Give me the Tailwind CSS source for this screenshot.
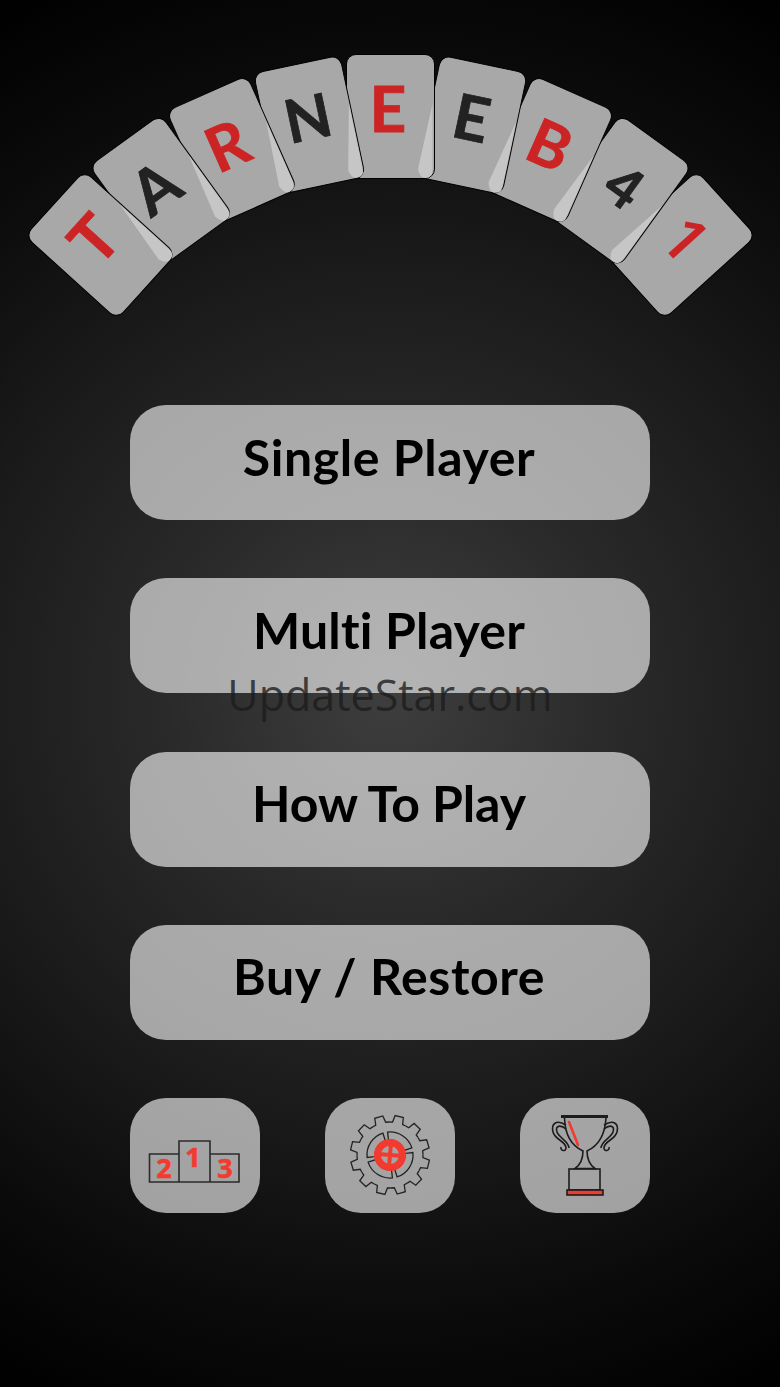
<!DOCTYPE html>
<html lang="en">
<head>
  <meta charset="UTF-8" />
  <meta name="viewport" content="width=device-width, initial-scale=1.0"/>
  <title>Tarneeb 41</title>
  <script src="https://cdn.jsdelivr.net/npm/@tailwindcss/browser@4"></script>
</head>
<body class="font-['Lato',sans-serif]">
  <div class="relative w-[780px] h-[1387px] overflow-hidden bg-[radial-gradient(circle_795px_at_390px_693px,#3e3e3e_0%,#2a2a2a_28%,#1a1a1a_55%,#0a0a0a_80%,#000_100%)]">

    <!-- card fan, every card turns about the same point below the logo -->
    <div class="relative h-[405px]">
      <div class="absolute left-[345.5px] top-[54px] w-[89px] h-[125px] origin-[44.5px_454px] -rotate-[47.8deg] z-[9] bg-[#a8a8a8] border-[1.5px] border-black rounded-[10px] flex items-center justify-center pb-[20px] text-[#cc2424] text-[64px] leading-none font-bold [-webkit-text-stroke:0.8px_currentColor]">
        T
        <svg class="absolute -inset-[1.5px]" width="89" height="125" viewBox="0 0 89 125"><path d="M87.5 50 L87.5 117 Q87.5 124 80 124 Q75 124 73 115 Z" fill="#c6c6c6" stroke="none"/></svg>
      </div>
      <div class="absolute left-[345.5px] top-[54px] w-[89px] h-[125px] origin-[44.5px_454px] -rotate-[35.85deg] z-[8] bg-[#a8a8a8] border-[1.5px] border-black rounded-[10px] flex items-center justify-center pb-[15px] pr-[6px] text-[#222] text-[62px] leading-none font-bold [-webkit-text-stroke:0.8px_currentColor]">
        A
        <svg class="absolute -inset-[1.5px]" width="89" height="125" viewBox="0 0 89 125"><path d="M87.5 50 L87.5 117 Q87.5 124 80 124 Q75 124 73 115 Z" fill="#c6c6c6"/></svg>
      </div>
      <div class="absolute left-[345.5px] top-[54px] w-[89px] h-[125px] origin-[44.5px_454px] -rotate-[23.9deg] z-[7] bg-[#a8a8a8] border-[1.5px] border-black rounded-[10px] flex items-center justify-center pb-[16px] pr-[5px] text-[#cc2424] text-[62px] leading-none font-bold [-webkit-text-stroke:0.8px_currentColor]">
        R
        <svg class="absolute -inset-[1.5px]" width="89" height="125" viewBox="0 0 89 125"><path d="M87.5 50 L87.5 117 Q87.5 124 80 124 Q75 124 73 115 Z" fill="#c6c6c6"/></svg>
      </div>
      <div class="absolute left-[345.5px] top-[54px] w-[89px] h-[125px] origin-[44.5px_454px] -rotate-[11.95deg] z-[6] bg-[#a8a8a8] border-[1.5px] border-black rounded-[10px] flex items-center justify-center pb-[18px] text-[#222] text-[60px] leading-none font-bold [-webkit-text-stroke:0.8px_currentColor]">
        N
        <svg class="absolute -inset-[1.5px]" width="89" height="125" viewBox="0 0 89 125"><path d="M87.5 50 L87.5 117 Q87.5 124 80 124 Q75 124 73 115 Z" fill="#c6c6c6"/></svg>
      </div>
      <div class="absolute left-[345.5px] top-[54px] w-[89px] h-[125px] z-[5] bg-[#a8a8a8] border-[1.5px] border-black rounded-[10px] flex items-center justify-center pb-[18px] pr-[4px] text-[#cc2424] text-[64px] leading-none font-bold [-webkit-text-stroke:0.8px_currentColor]">
        E
        <svg class="absolute -inset-[1.5px]" width="89" height="125" viewBox="0 0 89 125"><path d="M87.5 50 L87.5 117 Q87.5 124 80 124 Q75 124 73 115 Z" fill="#c6c6c6"/></svg>
      </div>
      <div class="absolute left-[345.5px] top-[54px] w-[89px] h-[125px] origin-[44.5px_454px] rotate-[11.95deg] z-[4] bg-[#a8a8a8] border-[1.5px] border-black rounded-[10px] flex items-center justify-center pb-[18px] pr-[3px] text-[#222] text-[62px] leading-none font-bold [-webkit-text-stroke:0.8px_currentColor]">
        E
        <svg class="absolute -inset-[1.5px]" width="89" height="125" viewBox="0 0 89 125"><path d="M87.5 50 L87.5 117 Q87.5 124 80 124 Q75 124 73 115 Z" fill="#c6c6c6"/></svg>
      </div>
      <div class="absolute left-[345.5px] top-[54px] w-[89px] h-[125px] origin-[44.5px_454px] rotate-[23.9deg] z-[3] bg-[#a8a8a8] border-[1.5px] border-black rounded-[10px] flex items-center justify-center pb-[14px] pr-[3px] text-[#cc2424] text-[62px] leading-none font-bold [-webkit-text-stroke:0.8px_currentColor]">
        B
        <svg class="absolute -inset-[1.5px]" width="89" height="125" viewBox="0 0 89 125"><path d="M87.5 50 L87.5 117 Q87.5 124 80 124 Q75 124 73 115 Z" fill="#c6c6c6"/></svg>
      </div>
      <div class="absolute left-[345.5px] top-[54px] w-[89px] h-[125px] origin-[44.5px_454px] rotate-[35.85deg] z-[2] bg-[#a8a8a8] border-[1.5px] border-black rounded-[10px] flex items-center justify-center pb-[14px] pl-[2px] text-[#222] text-[56px] leading-none font-bold [-webkit-text-stroke:0.8px_currentColor]">
        4
        <svg class="absolute -inset-[1.5px]" width="89" height="125" viewBox="0 0 89 125"><path d="M87.5 50 L87.5 117 Q87.5 124 80 124 Q75 124 73 115 Z" fill="#c6c6c6"/></svg>
      </div>
      <div class="absolute left-[345.5px] top-[54px] w-[89px] h-[125px] origin-[44.5px_454px] rotate-[47.8deg] z-[1] bg-[#a8a8a8] border-[1.5px] border-black rounded-[10px] flex items-center justify-center pb-[20px] pr-[2px] text-[#cc2424] text-[62px] leading-none font-semibold font-['Open_Sans',sans-serif]">
        1
      </div>
    </div>

    <!-- menu -->
    <div class="flex flex-col items-center gap-[58.33px] text-black text-[50px] leading-none font-bold">
      <button class="w-[520px] h-[115px] rounded-[36px] bg-white/[.61] pb-[12px] pr-[2px] tracking-[0.6px]">Single Player</button>
      <button class="w-[520px] h-[115px] rounded-[36px] bg-white/[.61] pb-[12px] pr-[2px] tracking-[0.2px]">Multi Player</button>
      <button class="w-[520px] h-[115px] rounded-[36px] bg-white/[.61] pb-[12px] pr-[2px] tracking-[-0.1px]">How To Play</button>
      <button class="w-[520px] h-[115px] rounded-[36px] bg-white/[.61] pb-[12px] pr-[2px] tracking-[0.6px]">Buy / Restore</button>

      <div class="w-[520px] flex justify-between">
        <button class="w-[130px] h-[115px] rounded-[36px] bg-white/[.61]">
          <svg width="130" height="115" viewBox="130 1098 130 115">
            <path d="M179 1182 V1154 H149.5 V1182 H239 V1154 H210 M179 1182 V1141 H210 V1182" fill="none" stroke="#2b2b2b" stroke-width="1.6"/>
            <g fill="#f33a2e" stroke="#f33a2e" stroke-width=".6" font-family="Open Sans" font-weight="700" font-size="27" text-anchor="middle">
              <text x="164" y="1178">2</text>
              <text x="193" y="1167">1</text>
              <text x="225" y="1178">3</text>
            </g>
          </svg>
        </button>
        <button class="w-[130px] h-[115px] rounded-[36px] bg-white/[.61]">
          <svg width="130" height="115" viewBox="325 1098 130 115">
            <defs>
              <path id="tooth" d="M-8.5 -31.9 L-5.2 -32.6 L-4.2 -39.5 L4.2 -39.5 L5.2 -32.6 L8.5 -31.9" fill="none" stroke="#222" stroke-width="1.3"/>
              <path id="seg" d="M2.4 -22.9 A23 23 0 0 1 22.9 -2.4 L14.9 -1.6 A15 15 0 0 0 1.6 -14.9 Z" fill="none" stroke="#222" stroke-width="1.3"/>
            </defs>
            <g transform="translate(390 1155) rotate(13.5)">
              <use href="#tooth"/>
              <use href="#tooth" transform="rotate(30)"/>
              <use href="#tooth" transform="rotate(60)"/>
              <use href="#tooth" transform="rotate(90)"/>
              <use href="#tooth" transform="rotate(120)"/>
              <use href="#tooth" transform="rotate(150)"/>
              <use href="#tooth" transform="rotate(180)"/>
              <use href="#tooth" transform="rotate(210)"/>
              <use href="#tooth" transform="rotate(240)"/>
              <use href="#tooth" transform="rotate(270)"/>
              <use href="#tooth" transform="rotate(300)"/>
              <use href="#tooth" transform="rotate(330)"/>
            </g>
            <g transform="translate(390 1155) rotate(-12)">
              <use href="#seg"/>
              <use href="#seg" transform="rotate(90)"/>
              <use href="#seg" transform="rotate(180)"/>
              <use href="#seg" transform="rotate(270)"/>
            </g>
            <g transform="translate(390 1155) rotate(5)">
              <circle r="12.5" fill="none" stroke="#f33a2e" stroke-width="7"/>
              <path d="M-12 0 H12 M0 -12 V12" stroke="#f33a2e" stroke-width="4"/>
            </g>
          </svg>
        </button>
        <button class="w-[130px] h-[115px] rounded-[36px] bg-white/[.61]">
          <svg width="130" height="115" viewBox="520 1098 130 115">
            <g fill="none" stroke="#1c1c1c" stroke-width="1.6">
              <path d="M561 1116.5 H608" stroke-width="3.2"/>
              <path d="M564.5 1118 C565 1135 572 1146 583 1151 C583 1160 580 1165 575 1168.5 H595 C590 1165 587 1160 587 1151 C598 1146 605 1135 606 1118"/>
              <path d="M566 1125 C556 1119 551 1124 553 1132 C555 1140 566 1141 566 1148 C566 1152 560 1151 561 1147"/>
              <path d="M566 1129 C560 1124 555 1126 557 1132 C559 1138 569 1141 569 1148"/>
              <path d="M604 1125 C614 1119 619 1124 617 1132 C615 1140 604 1141 604 1148 C604 1152 610 1151 609 1147"/>
              <path d="M604 1129 C610 1124 615 1126 613 1132 C611 1138 601 1141 601 1148"/>
              <rect x="569" y="1169" width="31" height="21"/>
              <rect x="567" y="1190" width="36" height="5" fill="#f33a2e"/>
            </g>
            <path d="M569 1122 L578 1145" stroke="#f33a2e" stroke-width="2.6" stroke-linecap="round"/>
          </svg>
        </button>
      </div>
    </div>

    <!-- store watermark lies over the menu -->
    <div class="absolute left-0 right-0 top-[665px] text-center font-['Open_Sans',sans-serif] text-[43px] leading-[60px] text-[#1c1c1c]/80">UpdateStar.com</div>
  </div>
</body>
</html>
